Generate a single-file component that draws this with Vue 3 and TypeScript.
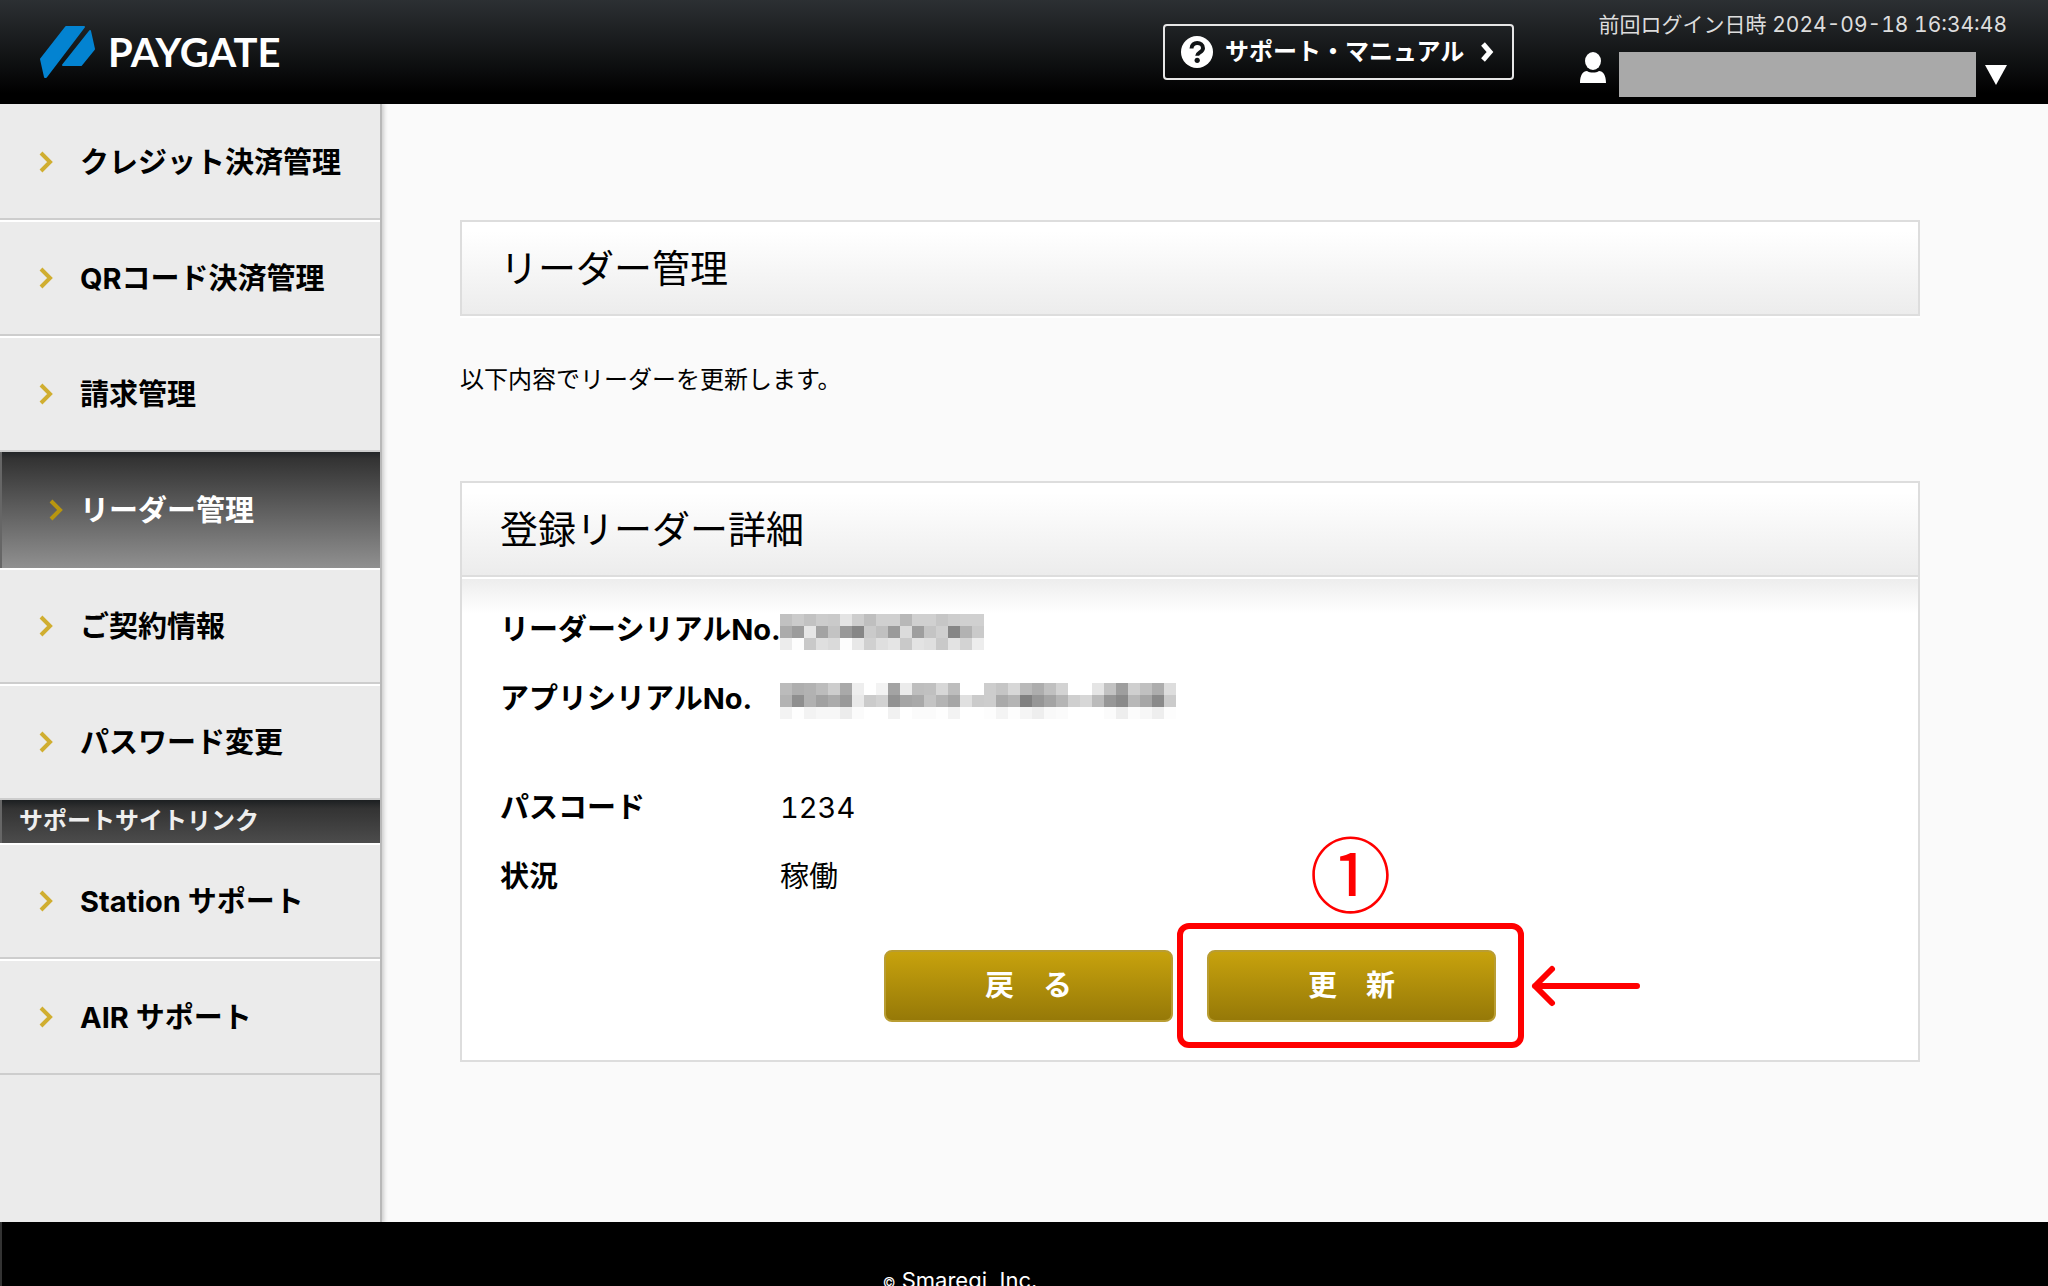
<script setup lang="ts">
interface NavItem {
  label: string
  active?: boolean
}

const mainNav: NavItem[] = [
  { label: 'クレジット決済管理' },
  { label: 'QRコード決済管理' },
  { label: '請求管理' },
  { label: 'リーダー管理', active: true },
  { label: 'ご契約情報' },
  { label: 'パスワード変更' },
]

const supportNav: NavItem[] = [
  { label: 'Station サポート' },
  { label: 'AIR サポート' },
]

// Grey levels of the masked values, one two-digit hex level per cell.
const readerSerialMask: string[] = [
  'c1cbc2cccae4cebfd0d0b8d0d0c6cdd0d0',
  'ab9ce6a3c39986cac09adb9ec4cf86b2ca',
  'ecfdc9dfdafde8d0dfe5c9e3dfc9e3d3ed',
]
const appSerialMask: string[] = [
  'bbaeb2bccda9eefff3a3ebbec0d7bdffffcdc5d7b9adc0d3ffffe5c29ecfc0addd',
  'b38fb1a1ab99e9cbd292a5a9c4b4a6e0cbcdaab48096a4b5cfd7bb978ab8a68acb',
  'f3fef3f7f7ecfbfffff1fffbfbfef3fffffdf4fdf5eef9fbfffffffbeefcf7eefd',
]

interface Cell {
  x: number
  y: number
  fill: string
}

function toCells(rows: string[]): Cell[] {
  return rows.flatMap((row, y) =>
    (row.match(/../g) ?? []).map((v, x) => ({ x, y, fill: `#${v}${v}${v}` })),
  )
}

const readerSerial = toCells(readerSerialMask)
const appSerial = toCells(appSerialMask)
</script>

<template>
  <div class="page">
    <header class="header">
      <a class="logo" href="#" aria-label="PAYGATE">
        <svg width="56" height="54" viewBox="0 0 56 54" aria-hidden="true">
          <g fill="#0383d1" stroke="#0383d1" stroke-width="2" stroke-linejoin="round">
            <path d="M26 2H44L6 52H5L1 34Z" />
            <path d="M50 6 54 24 41 40H23Z" />
          </g>
        </svg>
        <span class="logo-text">PAYGATE</span>
      </a>

      <a class="support" href="#">
        <svg width="32" height="32" viewBox="0 0 32 32" aria-hidden="true">
          <circle cx="16" cy="16" r="16" fill="#fff" />
          <path d="M10.500 12.500C10.500 5 22 5.500 22 12.300c0 4-5.800 4.200-5.800 7.500" fill="none" stroke="#111416" stroke-width="4" />
          <circle cx="16.200" cy="24.300" r="2.600" fill="#111416" />
        </svg>
        <span>サポート・マニュアル</span>
        <svg class="support-arrow" width="16" height="20" viewBox="0 0 16 20" aria-hidden="true">
          <path d="M3 2l7 8-7 8" fill="none" stroke="#fff" stroke-width="5" />
        </svg>
      </a>

      <div class="account">
        <div class="last-login">前回ログイン日時 2024-09-18 16:34:48</div>
        <div class="user">
          <svg class="user-icon" width="28" height="32" viewBox="0 0 28 32" aria-hidden="true">
            <ellipse cx="14" cy="9" rx="8" ry="9" fill="#fff" />
            <path d="M1 31c0-8 3-12 7-12 3 2 9 2 12 0 4 0 7 4 7 12z" fill="#fff" />
          </svg>
          <div class="user-name"></div>
          <button class="user-menu" type="button" aria-label="メニュー">
            <svg width="22" height="20" viewBox="0 0 22 20" aria-hidden="true">
              <path d="M0 0H22L11 20Z" fill="#fff" />
            </svg>
          </button>
        </div>
      </div>
    </header>

    <div class="body">
      <nav class="sidebar">
        <a v-for="item in mainNav" :key="item.label" href="#" class="nav-item" :class="{ active: item.active }">
          <svg class="chevron" width="14" height="22" viewBox="0 0 14 22" aria-hidden="true">
            <path d="M2 2l9 9-9 9" />
          </svg>
          <span>{{ item.label }}</span>
        </a>
        <h2 class="nav-heading">サポートサイトリンク</h2>
        <a v-for="item in supportNav" :key="item.label" href="#" class="nav-item">
          <svg class="chevron" width="14" height="22" viewBox="0 0 14 22" aria-hidden="true">
            <path d="M2 2l9 9-9 9" />
          </svg>
          <span>{{ item.label }}</span>
        </a>
      </nav>

      <main class="main">
        <h1 class="title">リーダー管理</h1>
        <p class="lead">以下内容でリーダーを更新します。</p>

        <section class="card">
          <h2 class="card-title">登録リーダー詳細</h2>
          <div class="card-body">
            <dl class="details">
              <div class="row">
                <dt>リーダーシリアルNo.</dt>
                <dd>
                  <svg class="mask" width="204" height="36" viewBox="0 0 17 3" shape-rendering="crispEdges">
                    <rect v-for="(c, i) in readerSerial" :key="i" :x="c.x" :y="c.y" width="1" height="1" :fill="c.fill" />
                  </svg>
                </dd>
              </div>
              <div class="row">
                <dt>アプリシリアルNo.</dt>
                <dd>
                  <svg class="mask" width="396" height="36" viewBox="0 0 33 3" shape-rendering="crispEdges">
                    <rect v-for="(c, i) in appSerial" :key="i" :x="c.x" :y="c.y" width="1" height="1" :fill="c.fill" />
                  </svg>
                </dd>
              </div>
              <div class="row spaced">
                <dt>パスコード</dt>
                <dd class="code">1234</dd>
              </div>
              <div class="row">
                <dt>状況</dt>
                <dd>稼働</dd>
              </div>
            </dl>
            <div class="actions">
              <button class="btn" type="button">戻　る</button>
              <div class="marked">
                <button class="btn" type="button">更　新</button>
                <div class="frame"></div>
                <div class="step">①</div>
                <svg class="arrow" width="112" height="46" viewBox="0 0 112 46" aria-hidden="true">
                  <path d="M107 23H5M22 6 5 23 22 40" fill="none" stroke="#f00" stroke-width="6" stroke-linecap="round" stroke-linejoin="round" />
                </svg>
              </div>
            </div>
          </div>
        </section>
      </main>
    </div>

    <footer class="footer"><small>©</small> Smaregi, Inc.</footer>
  </div>
</template>

<style>
body {
  margin: 0;
  background: #fafafa;
}
</style>

<style scoped>
* {
  box-sizing: border-box;
}

.page {
  display: flex;
  flex-direction: column;
  height: 100vh;
  overflow: hidden;
  background: #fafafa;
  color: #000;
  font-family: Inter, "Noto Sans CJK JP", sans-serif;
  font-size: 24px;
}

h1,
h2,
p,
dl,
dd {
  margin: 0;
  font-weight: 400;
}

a {
  color: inherit;
  text-decoration: none;
}

button {
  padding: 0;
  border: 0;
  background: none;
  color: inherit;
  font-family: inherit;
}

svg {
  display: block;
  flex: none;
}

.header {
  display: flex;
  flex: none;
  align-items: flex-start;
  height: 104px;
  padding: 0 41px 0 40px;
  background: linear-gradient(#2c3033, #0a0b0c 70%, #000 90%);
  color: #fff;
}

.logo {
  display: flex;
  align-items: center;
  gap: 12px;
  margin: 25px auto 0 0;
}

.logo-text {
  font-family: Lato, sans-serif;
  font-size: 40px;
  font-weight: 700;
  line-height: 54px;
}

.support {
  display: flex;
  align-items: center;
  width: 351px;
  height: 56px;
  margin-top: 24px;
  padding: 0 16px;
  border: 2px solid #e6e6e6;
  border-radius: 4px;
  font-weight: 700;
  line-height: 32px;
  white-space: nowrap;
}

.support span {
  margin-left: 12px;
}

.support-arrow {
  margin-left: auto;
}

.account {
  display: flex;
  flex-direction: column;
  align-items: flex-end;
  width: 493px;
}

.last-login {
  height: 52px;
  color: #ddd;
  font-size: 21px;
  font-variant-numeric: tabular-nums;
  line-height: 50px;
  white-space: nowrap;
}

.user {
  display: flex;
}

.user-name {
  width: 357px;
  height: 45px;
  margin: 0 9px 0 12px;
  background: #a9a9a9;
}

.body {
  display: flex;
  flex: none;
  height: 1118px;
  overflow: hidden;
}

.sidebar {
  z-index: 1;
  flex: none;
  width: 380px;
  background: #ebebeb;
  box-shadow: 2px 0 0 #b8b8b8, 3px 0 4px 1px #ccc;
}

.nav-item {
  display: flex;
  align-items: center;
  height: 116px;
  padding-left: 39px;
  border-top: 2px solid #fff;
  border-bottom: 2px solid #cdcdcd;
  font-size: 29px;
  font-weight: 700;
  line-height: 40px;
  white-space: nowrap;
}

.nav-item:first-child {
  border-top-color: #ebebeb;
}

.nav-item span {
  margin-left: 27px;
  padding-top: 2px;
}

.chevron {
  fill: none;
  stroke: #d0ae30;
  stroke-width: 4;
}

.nav-item.active {
  padding-left: 49px;
  border: 0;
  background: linear-gradient(#222527, #333 6%, #909090);
  box-shadow: inset 2px 0 0 #666;
  color: #fff;
}

.active .chevron {
  stroke: #b8960f;
}

.nav-item.active span {
  margin-left: 17px;
}

.nav-heading {
  height: 43px;
  padding-left: 19px;
  background: linear-gradient(#1c1f21, #333 20%, #4c4c4c);
  box-shadow: inset 2px 0 0 #666;
  color: #eee;
  font-size: 24px;
  font-weight: 700;
  line-height: 42px;
}

.main {
  flex: 1;
  padding: 116px 128px 0 80px;
}

.title,
.card-title {
  padding: 0 38px;
  background: linear-gradient(#fff 10%, #ececec);
  font-size: 38px;
  line-height: 92px;
}

.title {
  border: 2px solid #ddd;
  box-shadow: 0 2px 0 #fff;
}

.lead {
  margin-top: 46px;
  line-height: 36px;
}

.card {
  margin-top: 83px;
  border: 2px solid #ddd;
  background: #fff;
}

.card-title {
  border-bottom: 2px solid #ddd;
}

.card-body {
  padding: 16px 38px;
  padding-bottom: 38px;
  border-top: 2px solid #fff;
  background: linear-gradient(#ededed, #fff 34px);
}

.row {
  display: flex;
  align-items: center;
  height: 69px;
  font-size: 29px;
  line-height: 40px;
}

.row.spaced {
  margin-top: 40px;
}

.mask {
  margin-top: 4px;
}

dt {
  flex: none;
  width: 280px;
  font-weight: 700;
  white-space: nowrap;
}

.code {
  font-variant-numeric: tabular-nums;
}

.actions {
  display: flex;
  justify-content: center;
  gap: 34px;
  margin-top: 39px;
}

.btn {
  display: block;
  width: 289px;
  height: 72px;
  border: 2px solid #b99d32;
  border-radius: 8px;
  background: linear-gradient(#c7a20d, #967908);
  color: #fff;
  font-size: 29px;
  font-weight: 700;
  line-height: 42px;
}

.marked {
  position: relative;
}

.frame {
  position: absolute;
  inset: -27px -28px -26px -30px;
  border: 6px solid #f00;
  border-radius: 12px;
  pointer-events: none;
}

.step {
  position: absolute;
  bottom: 100%;
  left: 50%;
  width: 90px;
  margin: 0 0 34px -46px;
  color: #f00;
  font-family: "Noto Sans CJK JP", sans-serif;
  font-size: 82px;
  line-height: 90px;
  text-align: center;
}

.arrow {
  position: absolute;
  top: 13px;
  left: 323px;
}

.footer {
  flex: none;
  height: 200px;
  padding: 42px 130px 0 0;
  border-left: 2px solid #333;
  background: #000;
  color: #fff;
  font-size: 22px;
  line-height: 32px;
  text-align: center;
}

.footer small {
  font-size: 14px;
}
</style>
